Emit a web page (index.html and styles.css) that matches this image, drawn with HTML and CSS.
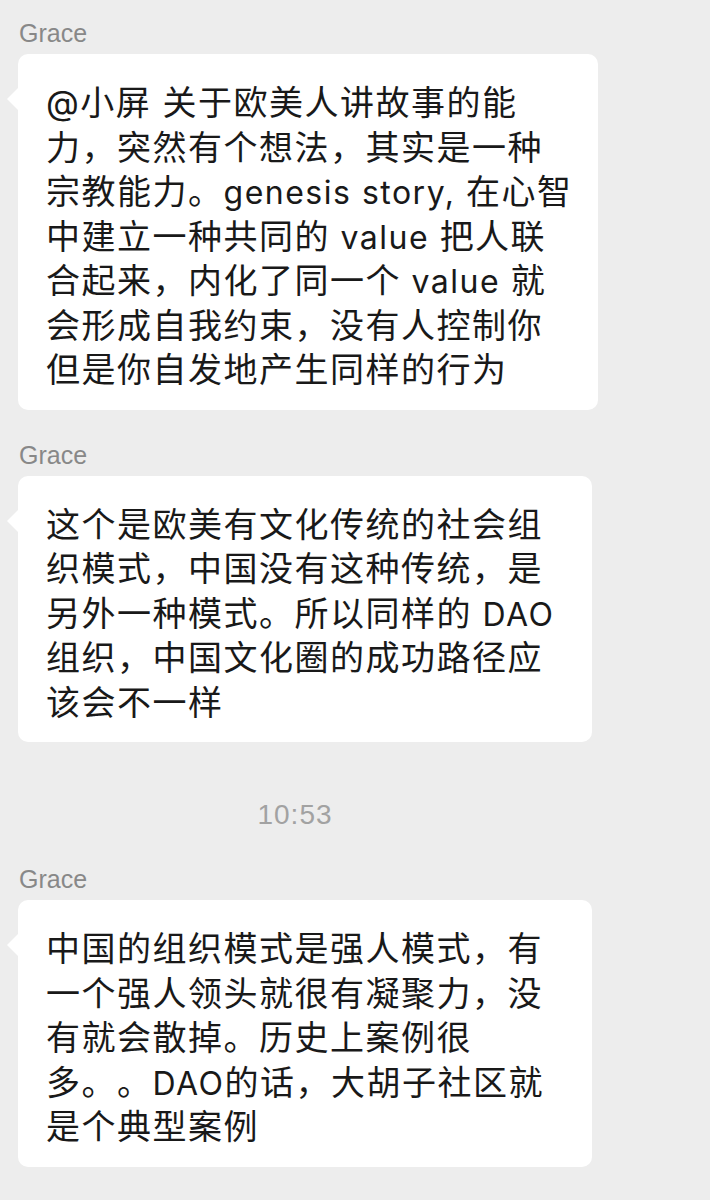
FILE: index.html
```html
<!DOCTYPE html>
<html lang="zh-CN">
<head>
<meta charset="utf-8">
<title>Chat</title>
<link rel="stylesheet" href="styles.css">
</head>
<body>
<div class="chat">
  <div class="msg">
    <div class="name">Grace</div>
    <div class="bubble bubble-wide">@小屏 关于欧美人讲故事的能<br>力，突然有个想法，其实是一种<br>宗教能力。<span class="en">genesis story, </span>在心智<br>中建立一种共同的<span class="en"> value </span>把人联<br>合起来，内化了同一个<span class="en"> value </span>就<br>会形成自我约束，没有人控制你<br>但是你自发地产生同样的行为</div>
  </div>
  <div class="msg">
    <div class="name">Grace</div>
    <div class="bubble">这个是欧美有文化传统的社会组<br>织模式，中国没有这种传统，是<br>另外一种模式。所以同样的<span class="en"> DAO</span><br>组织，中国文化圈的成功路径应<br>该会不一样</div>
  </div>
  <div class="time">10:53</div>
  <div class="msg msg-after-time">
    <div class="name">Grace</div>
    <div class="bubble">中国的组织模式是强人模式，有<br>一个强人领头就很有凝聚力，没<br>有就会散掉。历史上案例很<br>多。。<span class="en">DAO</span>的话，大胡子社区就<br>是个典型案例</div>
  </div>
</div>
</body>
</html>
```
FILE: styles.css
```css
html, body {
  margin: 0;
  padding: 0;
  background: #ededed;
}

.chat {
  width: 710px;
  height: 1200px;
  box-sizing: border-box;
  padding: 19px 0 0 18px;
  display: flex;
  flex-direction: column;
  overflow: hidden;
}

.msg {
  display: flex;
  flex-direction: column;
  align-items: flex-start;
}

.msg + .msg {
  margin-top: 31px;
}

.name {
  font-family: "Liberation Sans", Arial, sans-serif;
  font-size: 25px;
  line-height: 28px;
  height: 28px;
  color: #888888;
  padding-left: 1px;
  margin-bottom: 7px;
}

.bubble {
  position: relative;
  box-sizing: border-box;
  width: 574px;
  background: #ffffff;
  border-radius: 10px;
  padding: 27px 0 17px 28px;
  font-family: Inter, "Noto Sans CJK SC", sans-serif;
  font-size: 34px;
  line-height: 44.5px;
  letter-spacing: 1.5px;
  color: #191919;
  white-space: nowrap;
  text-spacing-trim: space-all;
}

.en {
  font-size: 32px;
  line-height: 30px;
}

.bubble-wide {
  width: 580px;
}

.bubble::before {
  content: "";
  position: absolute;
  left: -11px;
  top: 34px;
  width: 0;
  height: 0;
  border-top: 11px solid transparent;
  border-bottom: 11px solid transparent;
  border-right: 11px solid #ffffff;
}

.time {
  width: 554px;
  text-align: center;
  font-family: "Liberation Sans", Arial, sans-serif;
  font-size: 28px;
  line-height: 34px;
  letter-spacing: 1px;
  color: #a2a2a2;
  margin-top: 56px;
  margin-bottom: 33px;
}
```
